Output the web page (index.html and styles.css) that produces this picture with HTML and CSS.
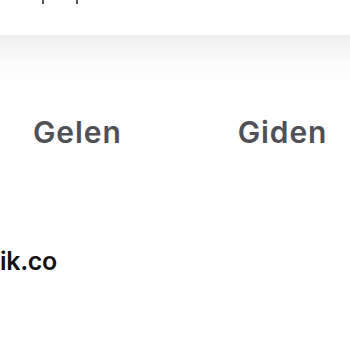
FILE: index.html
```html
<!DOCTYPE html>
<html lang="tr">
<head>
    <meta charset="UTF-8">
    <title>Mesajlar</title>
    <link rel="stylesheet" href="styles.css">
</head>
<body>
    <div class="page">
        <!-- top strip (text cut off above) -->
        <div class="top">
            <span class="tick tick-a"></span>
            <span class="tick tick-b"></span>
        </div>

        <!-- tabs -->
        <div class="tabs">
            <span class="tab">Gelen</span>
            <span class="tab">Giden</span>
        </div>

        <div class="domain">ik.co</div>
    </div>
</body>
</html>
```

FILE: styles.css
```css
body {
    margin: 0;
    background: #fff;
    font-family: Inter, "Noto Sans", sans-serif;
    overflow: hidden;
}

.page {
    width: 350px;
    height: 350px;
}

.top {
    position: relative;
    height: 35px;
}

.tick {
    position: absolute;
    top: 0;
    width: 2px;
    height: 4px;
    background: #55555c;
}

.tick-a {
    left: 42px;
}

.tick-b {
    left: 76px;
}

.tabs {
    display: flex;
    gap: 116px;
    padding: 79px 0 0 33px;
    background: linear-gradient(#efefef 0, #fafafa 25px, #fff 50px);
}

.tab {
    font-size: 30px;
    font-weight: 600;
    color: #505057;
    line-height: 36px;
    letter-spacing: 0.9px;
}

.domain {
    margin-top: 96px;
    font-size: 25px;
    font-weight: 600;
    color: #111;
    line-height: 30px;
    letter-spacing: -0.3px;
}
```
